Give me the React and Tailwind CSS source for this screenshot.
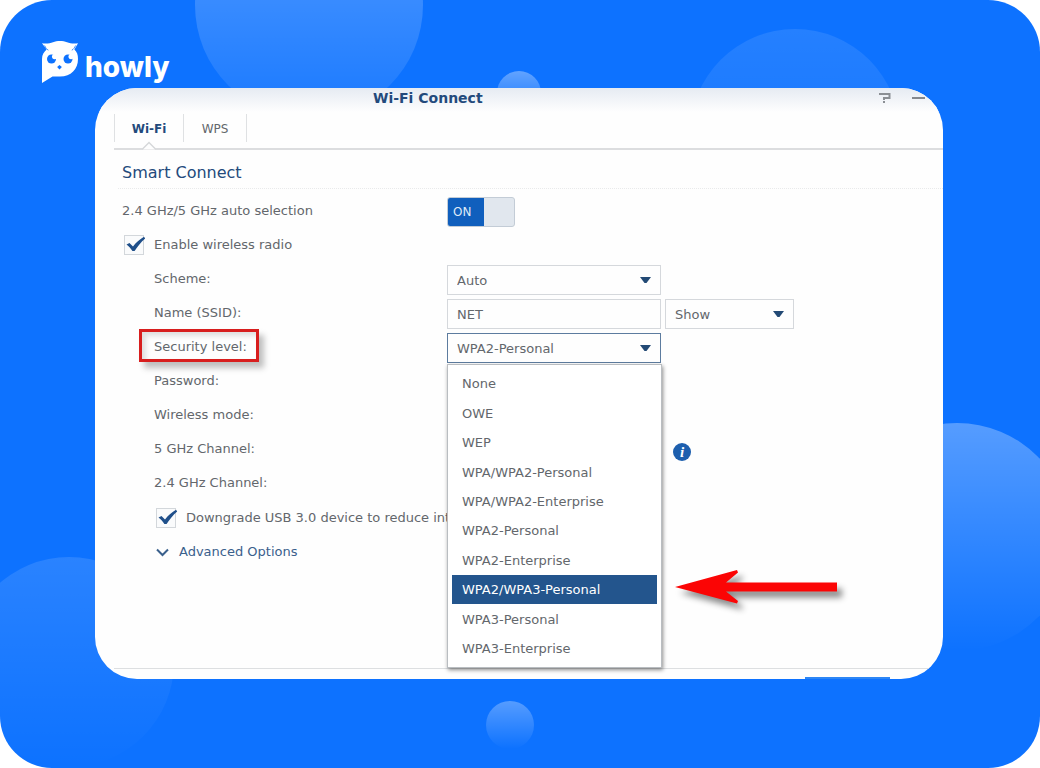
import React, { useState } from "react";

const securityLevels = [
    "None",
    "OWE",
    "WEP",
    "WPA/WPA2-Personal",
    "WPA/WPA2-Enterprise",
    "WPA2-Personal",
    "WPA2-Enterprise",
    "WPA2/WPA3-Personal",
    "WPA3-Personal",
    "WPA3-Enterprise",
];

const Logo = () => (
    <a href="#" className="flex w-fit items-start gap-[7px] text-white">
        <svg viewBox="0 0 36 42" className="h-[42px] w-9" fill="none">
            <path
                fill="#fff"
                d="M0 2.2C4 2.8 8 2.4 11 1.2C15 -0.3 21 -0.3 25 1.2C28 2.4 32 2.8 36 2.2L32.4 8.6C35 11 36 14 36 18C36 28 29 35.6 18 35.6H10.5L0 42V18C0 14 2 11 4.6 8.6Z"
            />
            <path
                stroke="#0d72ff"
                strokeWidth="0.8"
                d="M2.6 4.5C3.6 6.8 4.6 8.3 6.4 9.2M33.6 4.5C32.6 6.8 31.6 8.3 29.8 9.2"
            />
            <circle cx="9.5" cy="18" r="4.5" fill="#0d72ff" />
            <circle cx="26" cy="18" r="4.5" fill="#0d72ff" />
            <circle cx="12.6" cy="15.6" r="2.6" fill="#fff" />
            <circle cx="29.1" cy="15.6" r="2.6" fill="#fff" />
            <path fill="#0d72ff" d="M17.5 24l2.4 2-2.4 2.6-2.4-2.6z" />
        </svg>
        <span className="pt-3 font-['Inter',sans-serif] text-[28px] leading-7 font-extrabold">
            howly
        </span>
    </a>
);

const Arrow = () => (
    <svg
        viewBox="0 0 11 6"
        className="pointer-events-none absolute top-[11px] right-[9px] h-[6px] w-[11px]"
    >
        <path fill="#234a75" d="M0 0h11L6.5 6h-2z" />
    </svg>
);

const Select = ({ id, value, options, onChange, className, onClick }) => (
    <div className={"relative h-[30px] " + className}>
        <select
            id={id}
            aria-label={id}
            value={value}
            onChange={(e) => onChange(e.target.value)}
            onMouseDown={onClick}
            className="h-full w-full appearance-none bg-transparent pt-px pl-[9px] outline-none"
        >
            {options.map((o) => (
                <option key={o}>{o}</option>
            ))}
        </select>
        <Arrow />
    </div>
);

const Checkbox = ({ id, label }) => {
    const [checked, setChecked] = useState(true);

    return (
        <div className="flex items-center">
            <span className="relative mr-[10px] h-5 w-5">
                <input
                    type="checkbox"
                    id={id}
                    checked={checked}
                    onChange={(e) => setChecked(e.target.checked)}
                    className="block h-5 w-5 appearance-none border border-[#d3d7db] bg-[#fafbfc]"
                />
                {checked && (
                    <svg
                        viewBox="0 0 20 20"
                        className="pointer-events-none absolute top-0 left-[2px] h-5 w-5"
                    >
                        <path
                            fill="#1f4f8a"
                            d="M0.5 9.5L3.5 8L7 11.5C10 7.5 14 4 18 1.8L19.2 3.4C15 7 11.5 11.5 8.6 16H6.4C4.8 13.5 3 11.5 0.5 9.5Z"
                        />
                    </svg>
                )}
            </span>
            <label htmlFor={id} className="whitespace-nowrap">
                {label}
            </label>
        </div>
    );
};

const Row = ({ label, htmlFor, marked, children }) => (
    <div className="flex h-[34px] items-center pl-8">
        <div className="w-[293px]">
            <label htmlFor={htmlFor} className="relative">
                {marked && (
                    <span className="absolute -top-[10px] -right-3 -bottom-2 -left-[15px] border-[3px] border-[#d81e1e] shadow-[5px_6px_6px_rgba(0,0,0,0.25),inset_4px_4px_5px_rgba(0,0,0,0.12)]"></span>
                )}
                <span className="relative">{label}</span>
            </label>
        </div>
        <div className="flex pt-[2px]">{children}</div>
    </div>
);

const RedArrow = () => (
    <svg
        viewBox="0 0 162 34"
        className="absolute -top-[5px] left-[223px] h-[34px] w-[162px] overflow-visible drop-shadow-[5px_6px_3px_rgba(0,0,0,0.45)]"
    >
        <path
            fill="#fb0505"
            d="M0 17L62 0L63 2.5L51 12.5H162V21.5H51L63 31L62 33.5Z"
        />
    </svg>
);

const SecurityMenu = ({ selected, onSelect }) => (
    <div
        role="listbox"
        aria-label="Security level"
        className="absolute top-[31px] left-0 z-10 flex h-[304px] w-[215px] flex-col border border-[#b9bdc1] bg-white p-1 shadow-[1px_2px_4px_rgba(0,0,0,0.45)]"
    >
        {securityLevels.map((level) => (
            <button
                key={level}
                type="button"
                role="option"
                aria-selected={level === selected}
                onClick={() => onSelect(level)}
                className={
                    level === selected
                        ? "relative flex-1 bg-[#23558d] pt-px pl-[10px] text-left text-white"
                        : "flex-1 pt-px pl-[10px] text-left"
                }
            >
                {level}
                {level === selected && <RedArrow />}
            </button>
        ))}
    </div>
);

const App = () => {
    const [on, setOn] = useState(true);
    const [scheme, setScheme] = useState("Auto");
    const [ssid, setSsid] = useState("NET");
    const [visibility, setVisibility] = useState("Show");
    const [security, setSecurity] = useState("WPA2-Personal");
    const [highlighted, setHighlighted] = useState("WPA2/WPA3-Personal");
    const [open, setOpen] = useState(true);

    return (
        <div className="relative min-h-screen overflow-hidden rounded-[52px] bg-[#0d72ff] font-['DejaVu_Sans',sans-serif] text-[13px] text-[#63676c]">
            {/* background bubbles */}
            <div className="absolute -top-[109px] left-[195px] h-[228px] w-[228px] rounded-full bg-linear-to-b from-white/30 to-white/5"></div>
            <div className="absolute top-[71px] left-[497px] h-11 w-11 rounded-full bg-linear-to-b from-white/35 to-white/0"></div>
            <div className="absolute top-[29px] right-[140px] h-[210px] w-[210px] rounded-full bg-linear-to-b from-white/10 to-white/0"></div>
            <div className="absolute top-[423px] -right-[31px] h-[228px] w-[228px] rounded-full bg-linear-to-b from-white/30 to-white/0"></div>
            <div className="absolute top-[557px] -left-9 h-[210px] w-[210px] rounded-full bg-linear-to-b from-white/12 to-white/0"></div>
            <div className="absolute top-[701px] left-[486px] h-12 w-12 rounded-full bg-linear-to-b from-white/30 to-white/0"></div>

            <header className="relative h-[88px] pt-[41px] pl-[42px]">
                <Logo />
            </header>

            <main className="relative mr-[97px] ml-[95px] overflow-hidden rounded-[42px] bg-[#fefefe] pl-[19px]">
                <div className="-ml-[19px] flex h-6 items-center justify-between bg-linear-to-b from-[#e6ebf2] to-[#fefefe] pr-[18px] pb-[3px] pl-[278px]">
                    <h1 className="text-[14px] font-bold text-[#234a7c]">
                        Wi-Fi Connect
                    </h1>
                    <div className="flex items-center gap-[21px]">
                        <button type="button" aria-label="Help">
                            <svg
                                viewBox="0 0 13 11"
                                className="h-[11px] w-[13px]"
                                fill="none"
                                stroke="#8b8f94"
                                strokeWidth="2"
                            >
                                <path d="M1 1H11.5V5H6V7M6 8V10" />
                            </svg>
                        </button>
                        <button type="button" aria-label="Minimize">
                            <svg viewBox="0 0 13 11" className="h-[11px] w-[13px]">
                                <path stroke="#85898e" strokeWidth="2" d="M0 5H13" />
                            </svg>
                        </button>
                    </div>
                </div>

                <nav className="flex h-[38px] border-b-2 border-[#dcdddf] pt-[2px]">
                    <button
                        type="button"
                        className="relative h-7 w-[70px] border-x border-[#dfe1e3] pt-[2px] text-[12px] font-bold text-[#234a7c]"
                    >
                        Wi-Fi
                        <svg
                            viewBox="0 0 14 9"
                            className="absolute top-[27px] left-[27px] h-[9px] w-[14px]"
                        >
                            <path
                                fill="#fefefe"
                                stroke="#d6d8da"
                                strokeWidth="1.5"
                                d="M0 8.5L7 1.5L14 8.5"
                            />
                        </svg>
                    </button>
                    <button
                        type="button"
                        className="h-7 w-[63px] border-r border-[#dfe1e3] pt-[2px] text-[12px]"
                    >
                        WPS
                    </button>
                </nav>

                <form className="pl-2" onSubmit={(e) => e.preventDefault()}>
                    <h2 className="-ml-1 h-[39px] border-b border-dotted border-[#e9eaeb] pt-[11px] pl-1 text-[16px] leading-6 text-[#234a7c]">
                        Smart Connect
                    </h2>

                    <div className="flex h-[41px] items-center pt-[2px]">
                        <label htmlFor="auto-selection" className="w-[325px]">
                            2.4 GHz/5 GHz auto selection
                        </label>
                        <label className="mt-[2px] flex h-[30px] w-[68px] overflow-hidden rounded-[3px] border border-[#c3ccd6] bg-[#e1e7ee]">
                            <input
                                type="checkbox"
                                role="switch"
                                id="auto-selection"
                                className="sr-only"
                                checked={on}
                                onChange={(e) => setOn(e.target.checked)}
                            />
                            {on && (
                                <span className="w-9 bg-[#105fbd] pl-[5px] text-[12px] leading-7 text-[#dfeaf7]">
                                    ON
                                </span>
                            )}
                        </label>
                    </div>

                    <div className="flex h-8 items-center pb-[2px] pl-[2px]">
                        <Checkbox id="radio" label="Enable wireless radio" />
                    </div>

                    <Row label="Scheme:" htmlFor="scheme">
                        <Select
                            id="scheme"
                            value={scheme}
                            options={["Auto"]}
                            onChange={setScheme}
                            className="w-[214px] border border-[#d5d8dc]"
                        />
                    </Row>
                    <Row label="Name (SSID):" htmlFor="ssid">
                        <input
                            type="text"
                            id="ssid"
                            value={ssid}
                            onChange={(e) => setSsid(e.target.value)}
                            className="mr-1 h-[30px] w-[214px] border border-[#d5d8dc] pt-px pl-[9px] outline-none"
                        />
                        <Select
                            id="visibility"
                            value={visibility}
                            options={["Show", "Hide"]}
                            onChange={setVisibility}
                            className="w-[129px] border border-[#d5d8dc]"
                        />
                    </Row>
                    <Row label="Security level:" htmlFor="security" marked>
                        <div className="relative">
                            <Select
                                id="security"
                                value={security}
                                options={securityLevels}
                                onChange={setSecurity}
                                onClick={(e) => {
                                    e.preventDefault();
                                    setOpen(!open);
                                }}
                                className="w-[214px] border border-[#5d7c9f]"
                            />
                            {open && (
                                <SecurityMenu
                                    selected={highlighted}
                                    onSelect={(level) => {
                                        setHighlighted(level);
                                        setSecurity(level);
                                        setOpen(false);
                                    }}
                                />
                            )}
                        </div>
                    </Row>
                    <Row label="Password:" />
                    <Row label="Wireless mode:" />
                    <Row label="5 GHz Channel:">
                        <button
                            type="button"
                            aria-label="Channel info"
                            className="mt-1 ml-[226px] h-[18px] w-[18px] rounded-full bg-[#1d5fae] font-['Liberation_Serif',serif] text-[15px] leading-4 font-bold text-white italic"
                        >
                            i
                        </button>
                    </Row>
                    <Row label="2.4 GHz Channel:" />

                    <div className="flex h-9 items-center pl-[34px]">
                        <Checkbox
                            id="downgrade"
                            label="Downgrade USB 3.0 device to reduce inte"
                        />
                    </div>
                    <button
                        type="button"
                        className="ml-[34px] flex h-8 items-center gap-[10px] text-[#3a608c]"
                    >
                        <svg
                            viewBox="0 0 13 9"
                            className="h-[9px] w-[13px]"
                            fill="none"
                            stroke="#3a608c"
                            strokeWidth="2"
                        >
                            <path d="M1 1.5L6.5 7L12 1.5" />
                        </svg>
                        Advanced Options
                    </button>
                </form>

                <footer className="mt-[100px] flex h-[11px] items-end justify-end border-t border-[#dddfe1] pr-[53px]">
                    <div className="h-[2px] w-[85px] bg-[#2d86f5]"></div>
                </footer>
            </main>
        </div>
    );
};

export default App;
